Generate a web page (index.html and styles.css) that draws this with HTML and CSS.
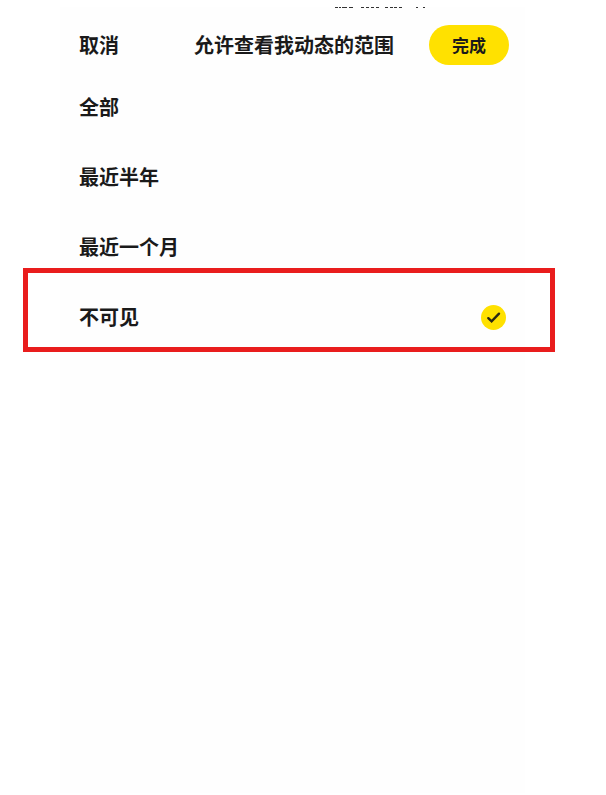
FILE: index.html
```html
<!DOCTYPE html>
<html lang="zh-CN">
<head>
<meta charset="utf-8">
<meta name="viewport" content="width=device-width, initial-scale=1">
<title>允许查看我动态的范围</title>
<link rel="stylesheet" href="styles.css">
</head>
<body>
<form class="panel">
  <svg class="status" width="94" height="2" viewBox="0 0 94 2" aria-hidden="true">
    <path d="M0 .5h3M4 .5h2M7 .5h5M14 .5h4M26 .5h3M31 .5h3M36 .5h3M41 .5h3M50 .5h3M55 .5h3M59 .5h3M64 .5h3M81 .5h2M88 .5h2" stroke="#333" fill="none"/>
  </svg>
  <header class="bar">
    <button class="cancel" type="button">取消</button>
    <h1 class="title">允许查看我动态的范围</h1>
    <button class="done" type="submit">完成</button>
  </header>
  <div class="options" role="radiogroup" aria-label="允许查看我动态的范围">
    <label class="option"><span>全部</span><input class="radio" type="radio" name="range"></label>
    <label class="option"><span>最近半年</span><input class="radio" type="radio" name="range"></label>
    <label class="option"><span>最近一个月</span><input class="radio" type="radio" name="range"></label>
    <label class="option marked">
      <span>不可见</span>
      <span class="choice">
        <input class="radio" type="radio" name="range" checked>
        <svg class="tick" width="25" height="25" viewBox="0 0 25 25" aria-hidden="true">
          <path d="M7.3 13.2l3.3 3.2 7.4-7.7" fill="none" stroke="#2b2813" stroke-width="2.4" stroke-linecap="round" stroke-linejoin="miter"/>
        </svg>
      </span>
    </label>
  </div>
</form>
</body>
</html>
```
FILE: styles.css
```css
* {
  box-sizing: border-box;
}

body {
  margin: 0;
  min-height: 100vh;
  display: flex;
  padding: 7px 81px 2px 60px;
  background: #fff;
  color: #1a1a1a;
  font-family: "Noto Sans CJK SC", sans-serif;
  font-size: 20px;
  font-weight: 700;
  line-height: 28px;
}

.panel {
  flex: 1;
  background: #fefefe;
}

.status {
  display: block;
  margin-left: 275px;
}

.bar {
  display: grid;
  grid-template-columns: 1fr auto 1fr;
  align-items: center;
  padding: 16px 16px 7px 19px;
}

button {
  border: 0;
  padding: 0;
  background: none;
  color: inherit;
  font: inherit;
  cursor: pointer;
}

.cancel {
  justify-self: start;
}

.title {
  margin: 0;
  font-size: inherit;
  font-weight: inherit;
}

.done {
  justify-self: end;
  width: 80px;
  height: 40px;
  border-radius: 20px;
  background: #ffe100;
  font-size: 17px;
}

.option {
  position: relative;
  display: flex;
  align-items: center;
  justify-content: space-between;
  height: 70px;
  padding: 0 19px;
}

.choice {
  display: grid;
}

.radio {
  appearance: none;
  grid-area: 1 / 1;
  width: 25px;
  height: 25px;
  margin: 0;
  border-radius: 50%;
}

.radio:checked {
  background: #ffe100;
}

.tick {
  grid-area: 1 / 1;
  pointer-events: none;
}

/* Highlight frame that reaches past the panel on both sides */
.marked::after {
  content: "";
  position: absolute;
  inset: -14px -30px 0 -37px;
  border: 5px solid #e91d1d;
  pointer-events: none;
}
```
